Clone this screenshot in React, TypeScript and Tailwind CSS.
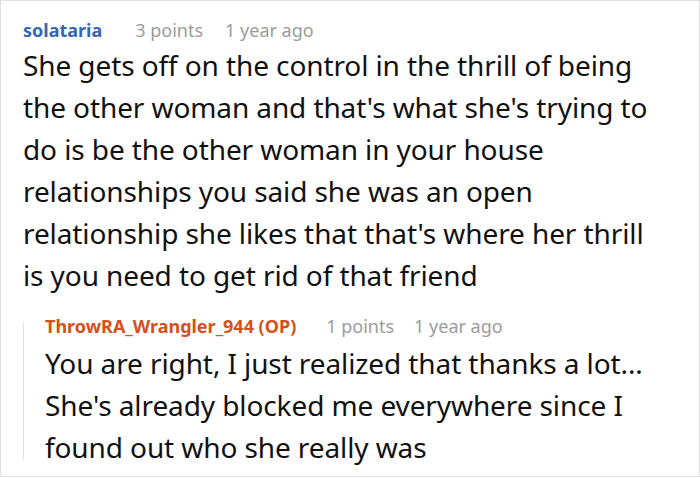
import React from "react";

function Meta({ name, points, color, gaps }: { name: string; points: string; color: string; gaps: string }) {
  return (
    <div className={`flex items-baseline text-[18px] leading-[24px] ${gaps}`}>
      <span className={`font-bold ${color}`}>{name}</span>
      <span className="text-[#9b9b9b]">{points}</span>
      <span className="text-[#9b9b9b]">1 year ago</span>
    </div>
  );
}

const comment = [
  "She gets off on the control in the thrill of being",
  "the other woman and that's what she's trying to",
  "do is be the other woman in your house",
  "relationships you said she was an open",
  "relationship she likes that that's where her thrill",
  "is you need to get rid of that friend",
];

const reply = [
  "You are right, I just realized that thanks a lot...",
  "She's already blocked me everywhere since I",
  "found out who she really was",
];

export default function App() {
  return (
    <div
      className="w-[700px] h-[477px] bg-white border border-[#e0e0e0] overflow-hidden text-[#111]"
      style={{ fontFamily: '"Noto Sans", "Open Sans", sans-serif' }}
    >
      <div className="pl-[22px] pt-[17px]">
        <Meta name="solataria" points="3 points" color="text-[#3566b3]" gaps="gap-[33px] [&>span:last-child]:-ml-[11px]" />
        <div className="mt-[2px] text-[28px] leading-[42px] tracking-[-0.1px] whitespace-nowrap">
          {comment.map((l) => (
            <div key={l}>{l}</div>
          ))}
        </div>
        <div className="mt-[18px] flex">
          <div className="w-px bg-[#e0e0e0] mt-[8px] mb-[8px]" />
          <div className="pl-[21px]">
            <Meta
              name="ThrowRA_Wrangler_944 (OP)"
              points="1 points"
              color="text-[#d5501c]"
              gaps="gap-[30px] [&>span:last-child]:-ml-[10px]"
            />
            <div className="mt-[4px] text-[28px] leading-[42px] tracking-[-0.1px] whitespace-nowrap">
              {reply.map((l) => (
                <div key={l}>{l}</div>
              ))}
            </div>
          </div>
        </div>
      </div>
    </div>
  );
}
